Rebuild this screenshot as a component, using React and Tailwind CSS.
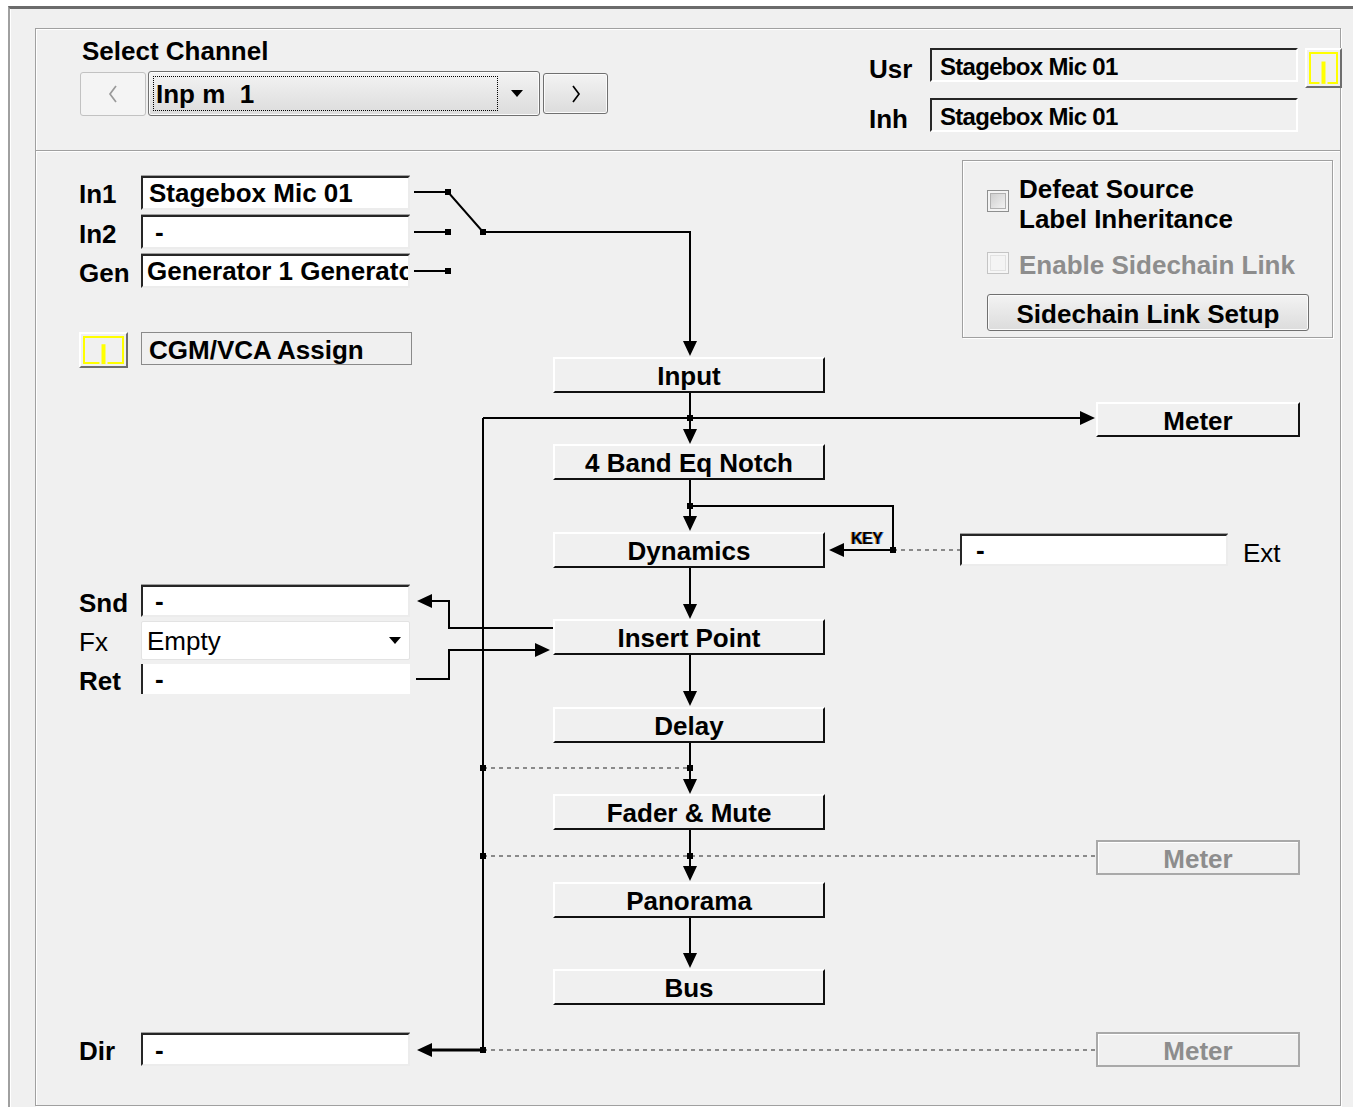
import React from 'react';

const sunken =
  'bg-white border-2 border-t-[#262626] border-l-[#262626] border-r-[#ececec] border-b-[#ececec] shadow-[0_-1px_0_#a0a0a0] flex items-center overflow-hidden whitespace-nowrap';
const block =
  'w-[272px] h-[36px] border-2 border-t-white border-l-white border-r-[#111] border-b-[#111] flex items-center justify-center pt-[2px]';
const meterOn =
  'absolute left-[1060px] w-[204px] h-[35px] border-2 border-t-white border-l-white border-r-[#111] border-b-[#111] flex items-center justify-center pt-[2px]';
const meterOff =
  'absolute left-[1060px] w-[204px] h-[35px] border-2 border-[#a9a9a9] shadow-[inset_1px_1px_0_#fff] flex items-center justify-center pt-[2px] text-[#8d8d8d]';
const winBtn =
  'rounded-[3px] border border-[#707070] bg-gradient-to-b from-[#f3f3f3] to-[#dcdcdc] shadow-[inset_0_0_0_1px_#fbfbfb]';
const labelField =
  'w-[368px] h-[34px] border-2 border-t-[#262626] border-l-[#262626] border-r-white border-b-white flex items-center pl-[8px] pt-[4px] text-[24px] tracking-[-0.7px]';

function Chevron({ dir, color }) {
  return (
    <svg width="12" height="20" viewBox="0 0 12 20">
      <polyline
        points={dir === 'left' ? '9,2 3,10 9,18' : '3,2 9,10 3,18'}
        fill="none"
        stroke={color}
        strokeWidth="1.7"
      />
    </svg>
  );
}

function Caret({ className = '' }) {
  return (
    <svg width="12" height="8" viewBox="0 0 12 8" className={className}>
      <polygon points="0,0 12,0 6,7" fill="#000" />
    </svg>
  );
}

function YellowBtn({ className, w, h }) {
  const iw = w - 4;
  const ih = h - 4;
  const cx = iw / 2;
  return (
    <div
      className={`border-2 border-t-white border-l-white border-r-[#6d6d6d] border-b-[#6d6d6d] bg-[#f0f0f0] ${className}`}
    >
      <svg width={iw} height={ih} className="block">
        <path
          d={`M${cx - 4} ${ih - 3} H3 V3 H${iw - 3} V${ih - 3} H${cx + 4}`}
          fill="none"
          stroke="#ffff00"
          strokeWidth="2"
        />
        <rect x={cx - 2} y={ih * 0.32} width="4" height={ih * 0.62} fill="#ffff00" />
      </svg>
    </div>
  );
}

function CheckBox({ disabled }) {
  return (
    <div
      className={`w-[22px] h-[22px] border p-[2px] ${
        disabled ? 'border-[#c4c4c4] bg-[#f6f6f6]' : 'border-[#8e8f8f] bg-[#f4f4f4]'
      }`}
    >
      <div
        className={`w-full h-full border ${
          disabled
            ? 'border-[#e2e2e2] bg-[#f4f4f4]'
            : 'border-[#b0b0b0] bg-gradient-to-br from-[#cfcfcf] to-[#f2f2f2]'
        }`}
      />
    </div>
  );
}

// connector drawing for the signal-flow diagram
function Wires() {
  const down = [205, 293, 380, 468, 555, 643, 730, 817];
  const dots = [
    [412, 41], [412, 81], [412, 120], [447, 81], [654, 267], [654, 355],
    [857, 399], [447, 617], [654, 617], [447, 705], [654, 705], [447, 899],
  ];
  return (
    <svg className="absolute inset-0 pointer-events-none" width="1304" height="954">
      <g stroke="#8a8a8a" strokeWidth="2" strokeDasharray="4 4" fill="none">
        <path d="M857 399 H924" />
        <path d="M447 617 H654" />
        <path d="M447 705 H1060" />
        <path d="M447 899 H1060" />
      </g>
      <g stroke="#000" strokeWidth="2" fill="none">
        <path d="M378 41 H412 L447 81 H654 V200" />
        <path d="M378 81 H412" />
        <path d="M378 120 H412" />
        <path d="M654 242 V288" />
        <path d="M447 267 H1050" />
        <path d="M447 267 V899" />
        <path d="M654 329 V376" />
        <path d="M654 355 H857 V399 H800" />
        <path d="M654 416 V463" />
        <path d="M517 477 H413 V450 H388" />
        <path d="M380 528 H413 V499 H506" />
        <path d="M654 504 V550" />
        <path d="M654 591 V638" />
        <path d="M654 679 V725" />
        <path d="M654 766 V812" />
        <path d="M447 899 H388" strokeWidth="3" />
      </g>
      <g fill="#000">
        {down.map((t) => (
          <polygon key={t} points={`647,${t - 15} 661,${t - 15} 654,${t}`} />
        ))}
        <polygon points="1044,260 1044,274 1059,267" />
        <polygon points="808,392 808,406 793,399" />
        <polygon points="396,443 396,457 381,450" />
        <polygon points="499,492 499,506 514,499" />
        <polygon points="396,892 396,906 381,899" />
        {dots.map(([x, y]) => (
          <rect key={`${x}-${y}`} x={x - 3} y={y - 3} width="6" height="6" />
        ))}
      </g>
    </svg>
  );
}

export default function App() {
  return (
    <div className="w-[1353px] h-[1107px] bg-white overflow-hidden font-['Liberation_Sans',Arial,sans-serif] font-bold text-[26px] leading-none text-black">
      <div className="ml-[8px] mt-[6px] w-[1345px] h-[1101px] border-t-[3px] border-t-[#6b6b6b] border-l-2 border-l-[#a0a0a0] shadow-[inset_1px_0_0_#fff] bg-[#f0f0f0] pl-[25px] pt-[19px]">
        <div className="w-[1306px] h-[1078px] border border-[#a0a0a0] shadow-[inset_1px_1px_0_#fff,1px_1px_0_#fff]">
          {/* channel header */}
          <div className="flex h-[122px] border-b border-[#a0a0a0] shadow-[0_1px_0_#fff]">
            <div className="pl-[44px] pt-[9px]">
              <div className="ml-[2px]">Select Channel</div>
              <div className="mt-[7px] flex items-center h-[45px]">
                <div className="w-[66px] h-[44px] rounded-[3px] border border-[#c2c2c2] bg-[#f4f4f4] flex items-center justify-center">
                  <Chevron dir="left" color="#9a9a9a" />
                </div>
                <div className={`ml-[2px] w-[392px] h-[45px] flex items-stretch p-[4px] ${winBtn}`}>
                  <div className="flex-1 border border-dotted border-black flex items-center pl-[2px] pt-[1px] whitespace-pre">
                    Inp m  1
                  </div>
                  <div className="w-[37px] flex items-center justify-center">
                    <Caret />
                  </div>
                </div>
                <div className={`ml-[3px] w-[65px] h-[41px] flex items-center justify-center ${winBtn}`}>
                  <Chevron dir="right" color="#000" />
                </div>
              </div>
            </div>
            <div className="ml-auto mr-[-2px] pt-[19px]">
              <div className="flex items-start h-[34px]">
                <div className="w-[61px] pt-[8px]">Usr</div>
                <div className={labelField}>Stagebox Mic 01</div>
                <YellowBtn w={37} h={40} className="ml-[7px] w-[37px] h-[40px]" />
              </div>
              <div className="flex items-start h-[34px] mt-[16px]">
                <div className="w-[61px] pt-[8px]">Inh</div>
                <div className={labelField}>Stagebox Mic 01</div>
              </div>
            </div>
          </div>

          {/* processing chain */}
          <div className="relative h-[954px]">
            <Wires />

            <div className="absolute left-[43px] top-[30px]">In1</div>
            <div className="absolute left-[43px] top-[70px]">In2</div>
            <div className="absolute left-[43px] top-[109px]">Gen</div>
            <div className={`absolute left-[105px] top-[25px] w-[269px] h-[34px] pl-[6px] ${sunken}`}>
              Stagebox Mic 01
            </div>
            <div className={`absolute left-[105px] top-[64px] w-[269px] h-[34px] pl-[12px] ${sunken}`}>-</div>
            <div className={`absolute left-[105px] top-[103px] w-[269px] h-[34px] pl-[4px] ${sunken}`}>
              Generator 1 Generator 1
            </div>

            <YellowBtn w={49} h={36} className="absolute left-[43px] top-[181px] w-[49px] h-[36px]" />
            <div className="absolute left-[105px] top-[181px] w-[271px] h-[33px] border border-[#8a8a8a] flex items-center pl-[7px] pt-[2px]">
              CGM/VCA Assign
            </div>

            <div className="absolute left-[926px] top-[9px] w-[371px] h-[178px] border border-[#a0a0a0] shadow-[inset_1px_1px_0_#fff,1px_1px_0_#fff] pt-[13px] pl-[24px]">
              <div className="flex items-start">
                <div className="mt-[16px]">
                  <CheckBox />
                </div>
                <div className="ml-[10px] leading-[30px]">
                  Defeat Source
                  <br />
                  Label Inheritance
                </div>
              </div>
              <div className="flex items-start mt-[16px]">
                <div className="mt-[2px]">
                  <CheckBox disabled />
                </div>
                <div className="ml-[10px] leading-[30px] text-[#8d8d8d]">Enable Sidechain Link</div>
              </div>
              <div className={`mt-[14px] w-[322px] h-[37px] flex items-center justify-center pt-[2px] ${winBtn}`}>
                Sidechain Link Setup
              </div>
            </div>

            <div className="absolute left-[517px] top-[206px] flex flex-col gap-[51.43px]">
              <div className={block}>Input</div>
              <div className={block}>4 Band Eq Notch</div>
              <div className={block}>Dynamics</div>
              <div className={block}>Insert Point</div>
              <div className={block}>Delay</div>
              <div className={block}>Fader &amp; Mute</div>
              <div className={block}>Panorama</div>
              <div className={block}>Bus</div>
            </div>

            <div className={`${meterOn} top-[251px]`}>Meter</div>
            <div className={`${meterOff} top-[689px]`}>Meter</div>
            <div className={`${meterOff} top-[881px]`}>Meter</div>

            <div className="absolute left-[815px] top-[380px] text-[16px] tracking-[-0.5px] [text-shadow:-1px_0_#e8a040,1px_0_#4a8ae8]">
              KEY
            </div>
            <div className={`absolute left-[924px] top-[383px] w-[268px] h-[32px] pl-[14px] ${sunken}`}>-</div>
            <div className="absolute left-[1207px] top-[389px] font-normal">Ext</div>

            <div className="absolute left-[43px] top-[439px]">Snd</div>
            <div className="absolute left-[43px] top-[478px] font-normal">Fx</div>
            <div className="absolute left-[43px] top-[517px]">Ret</div>
            <div className={`absolute left-[105px] top-[434px] w-[269px] h-[32px] pl-[12px] ${sunken}`}>-</div>
            <div className="absolute left-[105px] top-[470px] w-[269px] h-[39px] bg-white border border-[#e3e3e3] rounded-[2px] flex items-center pl-[5px] pr-[8px] font-normal">
              <span className="flex-1">Empty</span>
              <Caret />
            </div>
            <div className="absolute left-[105px] top-[513px] w-[269px] h-[30px] bg-white border-l-2 border-l-[#262626] flex items-center pl-[12px]">
              -
            </div>

            <div className="absolute left-[43px] top-[887px]">Dir</div>
            <div className={`absolute left-[105px] top-[882px] w-[269px] h-[33px] pl-[12px] ${sunken}`}>-</div>
          </div>
        </div>
      </div>
    </div>
  );
}
